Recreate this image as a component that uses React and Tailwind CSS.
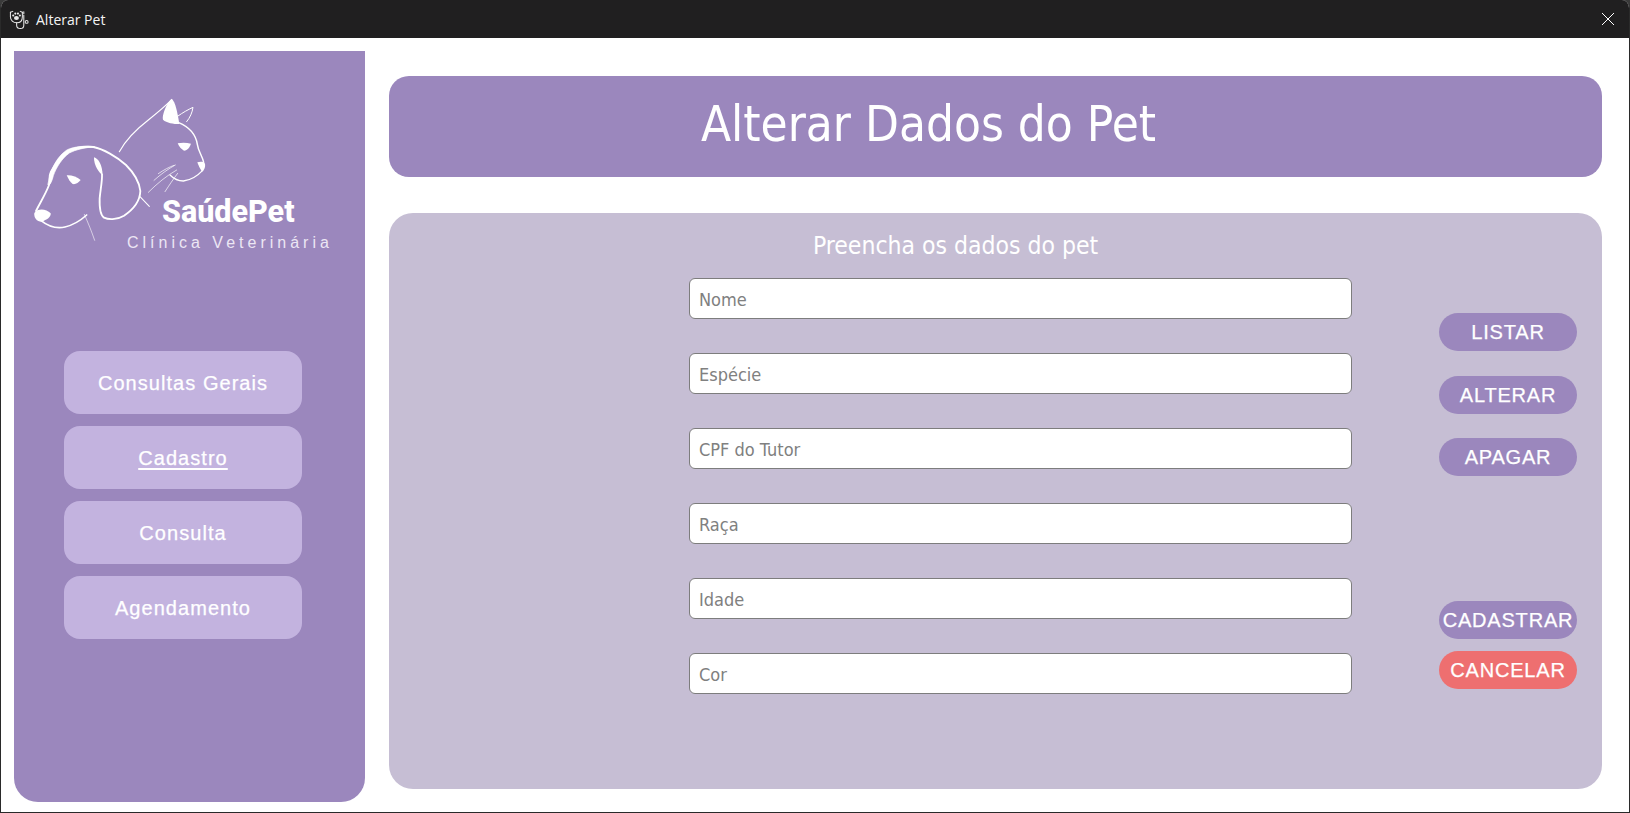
const Logo = () => (
  <svg viewBox="0 0 600 510" className="block w-[200px] h-[170px]" fill="none" stroke="#fff" strokeLinecap="round" strokeLinejoin="round">
    {/* dog */}
    <path d="M48 378C62 350 78 325 87 300C92 285 84 278 92 262C104 240 118 214 140 200C165 187 195 184 220 186C250 192 290 215 318 240C340 262 358 290 361 318C360 345 342 372 312 392C295 402 270 406 252 398C240 390 238 370 239 340C241 315 247 290 246 268" strokeWidth="5.5" />
    <path d="M92 262C104 232 120 208 142 194C165 184 195 182 224 185C195 188 168 193 148 204C126 220 110 245 100 272C96 290 88 305 84 300Z" fill="#fff" strokeWidth="2" />
    <path d="M222 217C236 221 247 240 248 272C238 264 221 242 222 217Z" fill="#fff" stroke="none" />
    <path d="M43 384C52 370 78 370 92 385C94 396 80 405 65 410C50 410 41 398 43 384Z" fill="#fff" stroke="none" />
    <path d="M62 406C85 424 110 432 135 426C160 420 180 408 200 390" strokeWidth="5" />
    <path d="M193 388C205 415 215 440 224 466" strokeWidth="2.2" opacity=".8" />
    <path d="M360 335L388 364" strokeWidth="3.2" />
    <path d="M140 271C155 270 171 276 182 285C176 293 166 299 158 297C150 291 145 282 140 271Z" fill="#fff" stroke="none" />
    {/* cat */}
    <path d="M298 200C320 160 350 132 385 105C410 85 435 65 455 44" strokeWidth="3.6" />
    <path d="M455 41C466 50 472 80 478 117C460 117 440 114 429 104C425 92 438 56 455 41Z" fill="#fff" stroke="none" />
    <path d="M474 93C488 83 504 74 519 67C517 82 510 98 500 110" strokeWidth="3" />
    <path d="M476 113C505 125 527 148 532 178C535 200 547 212 551 232" strokeWidth="4.4" />
    <path d="M532 232C540 229 551 229 555 236C557 247 551 257 546 260C540 251 535 241 532 232Z" fill="#fff" stroke="none" />
    <path d="M548 256C535 270 515 285 490 288C475 288 462 282 450 270" strokeWidth="3.8" />
    <path d="M473 175C487 172 501 173 513 176C509 187 503 196 492 197C484 193 477 185 473 175Z" fill="#fff" stroke="none" />
    <path d="M385 322C412 295 440 272 470 255M402 286C422 268 444 252 466 240M415 266C432 254 448 246 462 241M435 320C448 300 460 282 473 265" strokeWidth="2.4" opacity=".85" />
  </svg>
);

const TitleIcon = () => (
  <svg viewBox="0 0 22 22" className="block w-[21px] h-[21px]" fill="none" stroke="#e8e8e8" strokeWidth="1.1" strokeLinecap="round" strokeLinejoin="round">
    <path d="M1.5 3.5V8C1.5 12 4.5 14.5 8 14.5C11.5 14.5 14 12 14 8V3.5" />
    <path d="M1.5 3.5L4 2.5M14 3.5L11.8 2.5" />
    <ellipse cx="7.8" cy="9.5" rx="2.6" ry="2.1" fill="#e8e8e8" stroke="none" />
    <circle cx="4.4" cy="6.8" r="1.1" fill="#e8e8e8" stroke="none" />
    <circle cx="6.6" cy="4.8" r="1.1" fill="#e8e8e8" stroke="none" />
    <circle cx="9.4" cy="4.8" r="1.1" fill="#e8e8e8" stroke="none" />
    <circle cx="11.4" cy="6.8" r="1.1" fill="#e8e8e8" stroke="none" />
    <path d="M8 14.5V17C8 19.5 10 20.5 12 20.5C14.5 20.5 15.5 19 15.5 17V6.5" />
    <path d="M15.5 5V3" />
    <circle cx="18.5" cy="13.5" r="1.5" />
  </svg>
);

const navItems = ["Consultas Gerais", "Cadastro", "Consulta", "Agendamento"];
const fields = ["Nome", "Espécie", "CPF do Tutor", "Raça", "Idade", "Cor"];
const btnFont = "font-['Liberation_Sans',sans-serif] text-[20px] text-white [-webkit-text-stroke:0.25px_white]";

function ActionButton({ label, className = "" }) {
  return (
    <button className={`w-[138px] h-[38px] rounded-[19px] flex items-center justify-center whitespace-nowrap overflow-hidden tracking-[0.8px] ${btnFont} ${className}`}>
      {label}
    </button>
  );
}

export default function App() {
  return (
    <div className="w-[1630px] h-[813px] bg-[#3a3a3a] overflow-hidden">
      <div className="w-full h-full flex flex-col rounded-t-[8px] overflow-hidden border-x border-b border-[#2a2a2a] bg-white">
        <div className="h-[38px] shrink-0 bg-[#201f20] flex items-center pl-[8px] pr-[14px] text-white">
          <TitleIcon />
          <span className="ml-[6px] text-[14px] font-['Open_Sans',sans-serif] text-[#f4f4f4]">Alterar Pet</span>
          <svg viewBox="0 0 14 14" className="ml-auto w-[14px] h-[14px]" stroke="#fff" strokeWidth="1">
            <path d="M1 1L13 13M13 1L1 13" />
          </svg>
        </div>
        <div className="flex-1 flex min-h-0 pl-[13px]">
          <aside className="w-[351px] mt-[13px] mb-[10px] bg-[#9b87bd] rounded-b-[24px] flex flex-col">
            <div className="pl-[6px] pt-[34px]">
              <Logo />
            </div>
            <div className="-mt-[61px] pl-[148px] text-[30.5px] leading-[36px] font-extrabold font-['Roboto',sans-serif] text-white">SaúdePet</div>
            <div className="pl-[113px] mt-[4px] text-[16px] leading-[18px] tracking-[4px] whitespace-nowrap font-['Liberation_Sans',sans-serif] text-[#ece6f4]">Clínica Veterinária</div>
            <nav className="mt-[99px] ml-[50px] w-[238px] flex flex-col gap-[12px]">
              {navItems.map((n, i) => (
                <button key={n} className={`h-[63px] rounded-[16px] bg-[#c3b3df] tracking-[1.05px] ${btnFont} ${i === 1 ? "underline underline-offset-[3px]" : ""}`}>
                  {n}
                </button>
              ))}
            </nav>
          </aside>
          <main className="flex-1 pl-[24px] pr-[27px] pt-[38px] pb-[23px] flex flex-col gap-[36px]">
            <header className="h-[101px] shrink-0 bg-[#9b87bd] rounded-[20px] flex items-center justify-center pr-[134px]">
              <h1 className="text-[49px] leading-none text-white font-['DejaVu_Sans_Condensed','DejaVu_Sans',sans-serif] -mt-[5px]">Alterar Dados do Pet</h1>
            </header>
            <section className="flex-1 bg-[#c6bed4] rounded-[24px] pt-[16px] flex flex-col">
              <h2 className="text-[24.5px] leading-[34px] text-white text-center pr-[80px] font-['DejaVu_Sans_Condensed','DejaVu_Sans',sans-serif]">Preencha os dados do pet</h2>
              <div className="flex mt-[15px] pl-[300px]">
                <div className="w-[663px] flex flex-col gap-[34px]">
                  {fields.map((f) => (
                    <input key={f} placeholder={f} readOnly className="h-[41px] rounded-[6px] border border-[#7d7d7d] bg-white px-[9px] pt-[2px] text-[18px] font-['DejaVu_Sans_Condensed','DejaVu_Sans',sans-serif] placeholder:text-[#808080] outline-none" />
                  ))}
                </div>
                <div className="ml-[87px] pt-[35px] flex flex-col">
                  <ActionButton label="LISTAR" className="bg-[#9b87bd]" />
                  <ActionButton label="ALTERAR" className="bg-[#9b87bd] mt-[25px]" />
                  <ActionButton label="APAGAR" className="bg-[#9b87bd] mt-[24px]" />
                  <ActionButton label="CADASTRAR" className="bg-[#9b87bd] mt-[125px]" />
                  <ActionButton label="CANCELAR" className="bg-[#ee6f70] mt-[12px]" />
                </div>
              </div>
            </section>
          </main>
        </div>
      </div>
    </div>
  );
}
